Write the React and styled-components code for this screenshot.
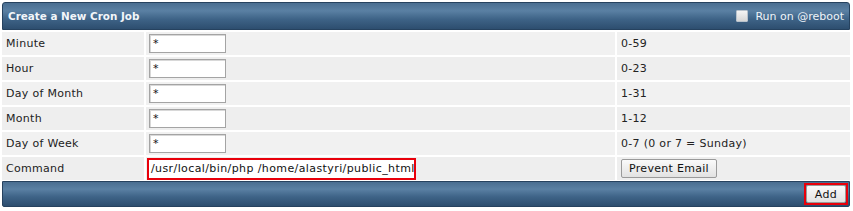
import React from "react";
import styled, { createGlobalStyle } from "styled-components";

const Global = createGlobalStyle`
  html, body { margin: 0; padding: 0; background: #ffffff; }
  body { font-family: "DejaVu Sans", Verdana, sans-serif; font-size: 11px; color: #222; letter-spacing: 0.3px; }
`;

const Panel = styled.div`
  margin: 2px 3px 0 2px;
  width: 848px;
`;

const Bar = styled.div`
  display: flex;
  align-items: center;
  justify-content: ${(p) => (p.$end ? "flex-end" : "space-between")};
  height: ${(p) => p.$h}px;
  box-sizing: border-box;
  padding: 0 ${(p) => (p.$end ? 1 : 4)}px 0 5px;
  background: linear-gradient(to bottom, #4a6e91 0%, #5a80a3 30%, #3e6387 62%, #2d4e6f 100%);
  border: 1px solid #26425f;
  border-radius: ${(p) => (p.$top ? "3px 3px 0 0" : "0 0 2px 2px")};
  color: #f2f6fa;
`;

const Title = styled.div`
  font-weight: bold;
  font-size: 10.4px;
  letter-spacing: 0;
`;

const Reboot = styled.label`
  display: flex;
  align-items: center;
  gap: 7px;
  font-size: 11px;
  letter-spacing: 0;
  color: #eef3f8;
  padding-right: 1px;
`;

const Check = styled.span`
  width: 10px;
  height: 10px;
  background: linear-gradient(#f4f4f4, #d6d6d6);
  border: 1px solid #b8c2cc;
  border-radius: 1px;
`;

const Grid = styled.div`
  display: grid;
  grid-template-columns: 142px 469px 1fr;
  column-gap: 2px;
  row-gap: 2px;
  background: #ffffff;
  padding: 2px 0 1px 0;
`;

const Cell = styled.div`
  height: 23px;
  display: flex;
  align-items: center;
  padding-left: ${(p) => p.$pl || 4}px;
  background: ${(p) => (p.$alt ? "#eeeeee" : "#f1f1f1")};
  color: #222;
`;

const TextInput = styled.div`
  box-sizing: border-box;
  width: ${(p) => p.$w}px;
  height: ${(p) => p.$h}px;
  background: #fff;
  border: ${(p) => (p.$hl ? "2px solid #e8000b" : "1px solid #a4a4a4")};
  box-shadow: ${(p) => (p.$hl ? "none" : "inset 1px 1px 0 #d8d8d8")};
  display: flex;
  align-items: center;
  padding-left: ${(p) => (p.$hl ? 2 : 3)}px;
  font-size: 11px;
  letter-spacing: ${(p) => (p.$hl ? 0.4 : 0)}px;
  color: #111;
  white-space: nowrap;
  overflow: hidden;
`;

const Button = styled.div`
  box-sizing: border-box;
  height: ${(p) => p.$h}px;
  padding: 0 ${(p) => p.$px}px;
  display: flex;
  align-items: center;
  background: linear-gradient(#fafafa, #e2e2e2);
  border: 1px solid #9a9a9a;
  border-radius: 2px;
  color: #111;
  font-size: 11px;
`;

const RedFrame = styled.div`
  border: 2px solid #e8000b;
  display: flex;
`;

const rows = [
  ["Minute", "0-59"],
  ["Hour", "0-23"],
  ["Day of Month", "1-31"],
  ["Month", "1-12"],
  ["Day of Week", "0-7 (0 or 7 = Sunday)"],
];

export default function App() {
  return (
    <>
      <Global />
      <Panel>
        <Bar $top $h={28}>
          <Title>Create a New Cron Job</Title>
          <Reboot>
            <Check />
            Run on @reboot
          </Reboot>
        </Bar>
        <Grid>
          {rows.map(([label, range], i) => (
            <React.Fragment key={label}>
              <Cell $alt={i % 2 === 1}>{label}</Cell>
              <Cell $alt={i % 2 === 1} $pl={3}>
                <TextInput $w={77} $h={19}>*</TextInput>
              </Cell>
              <Cell $alt={i % 2 === 1}>{range}</Cell>
            </React.Fragment>
          ))}
          <Cell $alt>Command</Cell>
          <Cell $alt $pl={1}>
            <TextInput $hl $w={269} $h={22}>
              /usr/local/bin/php /home/alastyri/public_html
            </TextInput>
          </Cell>
          <Cell $alt $pl={4}>
            <Button $h={19} $px={7}>Prevent Email</Button>
          </Cell>
        </Grid>
        <Bar $end $h={26}>
          <RedFrame>
            <Button $h={18} $px={8}>Add</Button>
          </RedFrame>
        </Bar>
      </Panel>
    </>
  );
}
